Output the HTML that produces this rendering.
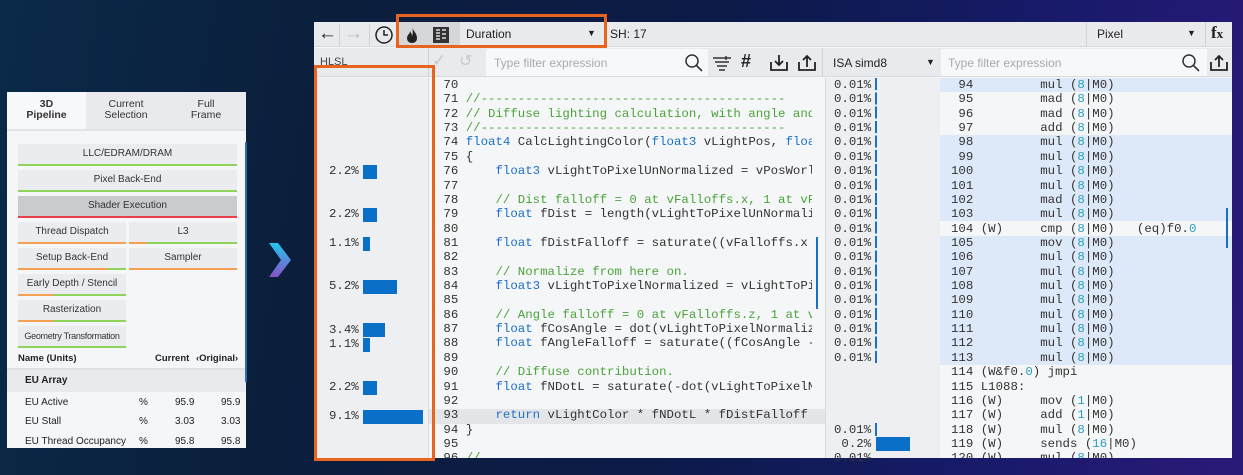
<!DOCTYPE html>
<html><head><meta charset="utf-8"><style>
*{margin:0;padding:0;box-sizing:border-box}
body{width:1243px;height:475px;overflow:hidden;position:relative;font-family:"Liberation Sans","DejaVu Sans",sans-serif;
background:linear-gradient(100deg,#0a2a48 0%,#0b1f3c 25%,#0c1a48 55%,#181a6a 80%,#2a1a78 100%)}
.a{position:absolute}
.lp{left:7px;top:92px;width:239px;height:356px;background:#f5f6f8;font-size:10px;color:#222}
.tab{position:absolute;top:0;height:37px;text-align:center;font-size:10.5px;line-height:11px;padding-top:7px;background:#e9eaed;color:#333}
.btn{position:absolute;height:22px;background:#ebecef;text-align:center;line-height:20px;font-size:10px;color:#333;white-space:nowrap;overflow:hidden}
.btn i{position:absolute;left:0;right:0;bottom:0;height:2px;display:block}
.win{left:314px;top:22px;width:918px;height:436px;background:#f5f6f8}
.mono{font-family:"Liberation Mono","DejaVu Sans Mono",monospace;font-size:12.4px;line-height:14.36px;white-space:pre}
.k{color:#1c6fc8}.c{color:#4ca23a}.n{color:#2aa0c0}
.bar{position:absolute;height:14px;background:#0a6fc6}
</style></head><body>

<div class="a lp">
 <div class="tab" style="left:0;width:79px;background:#f7f8fa;font-weight:bold">3D<br>Pipeline</div>
 <div class="tab" style="left:79px;width:80px">Current<br>Selection</div>
 <div class="tab" style="left:159px;width:80px">Full<br>Frame</div>
 <div class="a" style="left:0;top:37px;width:239px;height:2px;background:#e2e3e6"></div>
 <div class="btn" style="left:11px;top:52px;width:219px">LLC/EDRAM/DRAM<i style="background:#8fd45a"></i></div>
 <div class="btn" style="left:11px;top:78px;width:219px">Pixel Back-End<i style="background:#8fd45a"></i></div>
 <div class="btn" style="left:11px;top:104px;width:219px;background:#c9cbcf">Shader Execution<i style="background:#e8404a"></i></div>
 <div class="btn" style="left:11px;top:130px;width:108px">Thread Dispatch<i style="background:#f5a050"></i></div>
 <div class="btn" style="left:122px;top:130px;width:108px">L3<i style="background:linear-gradient(90deg,#f5a050 16%,#8fd45a 16%)"></i></div>
 <div class="btn" style="left:11px;top:156px;width:108px">Setup Back-End<i style="background:linear-gradient(90deg,#f5a050 83%,#8fd45a 83%)"></i></div>
 <div class="btn" style="left:122px;top:156px;width:108px">Sampler<i style="background:#f5a050"></i></div>
 <div class="btn" style="left:11px;top:182px;width:108px">Early Depth / Stencil<i style="background:linear-gradient(90deg,#f5a050 33%,#8fd45a 33%)"></i></div>
 <div class="btn" style="left:11px;top:208px;width:108px">Rasterization<i style="background:linear-gradient(90deg,#f5a050 33%,#8fd45a 33%)"></i></div>
 <div class="btn" style="left:11px;top:234px;width:108px;font-size:9px;letter-spacing:-0.3px">Geometry Transformation<i style="background:#8fd45a"></i></div>
 <div class="a" style="left:11px;top:261px;font-weight:bold;font-size:9.5px">Name (Units)</div>
 <div class="a" style="left:148px;top:261px;font-weight:bold;font-size:9.5px">Current</div>
 <div class="a" style="left:189px;top:261px;font-weight:bold;font-size:9.5px">‹Original›</div>
 <div class="a" style="left:0;top:276px;width:239px;height:2px;background:#e0e1e4"></div>
 <div class="a" style="left:0;top:278px;width:239px;height:22px;background:#e9eaed;font-weight:bold;padding:5px 0 0 18px">EU Array</div>
 <div class="a" style="left:18px;top:305px">EU Active</div><div class="a" style="left:132px;top:305px">%</div><div class="a" style="left:168px;top:305px">95.9</div><div class="a" style="left:214px;top:305px">95.9</div>
 <div class="a" style="left:18px;top:324px">EU Stall</div><div class="a" style="left:132px;top:324px">%</div><div class="a" style="left:168px;top:324px">3.03</div><div class="a" style="left:214px;top:324px">3.03</div>
 <div class="a" style="left:18px;top:344px">EU Thread Occupancy</div><div class="a" style="left:132px;top:344px">%</div><div class="a" style="left:168px;top:344px">95.8</div><div class="a" style="left:214px;top:344px">95.8</div>
 <div class="a" style="left:238px;top:50px;width:2px;height:240px;background:#2a6bb0"></div>
</div>

<svg class="a" style="left:264px;top:240px" width="32" height="40" viewBox="0 0 32 40">
<defs><linearGradient id="g" x1="0" y1="0" x2="0" y2="1"><stop offset="0" stop-color="#20c8f0"/><stop offset="1" stop-color="#8a50c8"/></linearGradient></defs>
<path d="M5 3 L14 3 L27 20 L14 37 L5 37 L17 20 Z" fill="url(#g)"/></svg>

<div class="a win">
 <div class="a" style="left:0;top:0;width:918px;height:25px;background:#e9eaed;border-bottom:1px solid #d8d9dc"></div>
 <div class="a" style="left:4px;top:1px;font-size:19px;color:#222">←</div>
 <div class="a" style="left:30px;top:1px;font-size:19px;color:#bbb">→</div>
 <div class="a" style="left:25px;top:2px;width:1px;height:22px;background:#d0d1d4"></div>
 <div class="a" style="left:55px;top:2px;width:1px;height:22px;background:#d0d1d4"></div>
 <svg class="a" style="left:60px;top:3px" width="20" height="20"><circle cx="10" cy="10" r="8" fill="none" stroke="#222" stroke-width="1.5"/><path d="M10 5 V10 H14" stroke="#222" stroke-width="1.5" fill="none"/></svg>
 <div class="a" style="left:83px;top:0;width:63px;height:25px;background:#d6d7db"></div>
 <svg class="a" style="left:90px;top:3px" width="16" height="20"><path d="M8 2 C9 6 13 8 13 13 C13 17 10 18 8 18 C5 18 3 16 3 13 C3 10 6 9 6 6 C7 8 8 9 8 11 C9 9 9 5 8 2Z" fill="#222"/></svg>
 <svg class="a" style="left:118px;top:4px" width="18" height="18"><rect x="1" y="1" width="16" height="16" fill="#333"/><path d="M4 4h4M4 7h4M4 10h4M4 13h4M10 4h4M10 8h4M10 12h4" stroke="#ddd" stroke-width="1.4"/></svg>
 <div class="a" style="left:146px;top:0;width:142px;height:25px;background:#e9eaed"></div>
 <div class="a" style="left:152px;top:5px;font-size:12px;color:#222">Duration</div>
 <div class="a" style="left:273px;top:6px;font-size:9px;color:#222">▼</div>
 <div class="a" style="left:290px;top:2px;width:1px;height:22px;background:#d0d1d4"></div>
 <div class="a" style="left:296px;top:5px;font-size:12px;color:#222">SH: 17</div>
 <div class="a" style="left:772px;top:0;width:1px;height:25px;background:#d0d1d4"></div>
 <div class="a" style="left:783px;top:5px;font-size:12px;color:#222">Pixel</div>
 <div class="a" style="left:873px;top:6px;font-size:9px;color:#222">▼</div>
 <div class="a" style="left:891px;top:0;width:1px;height:25px;background:#d0d1d4"></div>
 <div class="a" style="left:897px;top:1px;font-size:17px;color:#222;font-family:'Liberation Serif',serif;font-weight:bold">f<span style="font-size:13px">x</span></div>

 <div class="a" style="left:0;top:26px;width:918px;height:29px;background:#e9eaed;border-bottom:1px solid #d8d9dc"></div>
 <div class="a" style="left:6px;top:34px;font-size:11px;color:#444">HLSL</div>
 <div class="a" style="left:114px;top:26px;width:1px;height:29px;background:#d0d1d4"></div>
 <div class="a" style="left:118px;top:29px;font-size:17px;color:#c8c9cc">✓</div>
 <div class="a" style="left:145px;top:29px;font-size:16px;color:#c8c9cc">↺</div>
 <div class="a" style="left:172px;top:27px;width:222px;height:27px;background:#f7f8fa"></div>
 <div class="a" style="left:180px;top:34px;font-size:12px;color:#a8a9ad">Type filter expression</div>
 <svg class="a" style="left:370px;top:31px" width="20" height="20"><circle cx="8" cy="8" r="6" fill="none" stroke="#333" stroke-width="1.5"/><path d="M12.5 12.5 L18 18" stroke="#333" stroke-width="1.6"/></svg>
 <svg class="a" style="left:398px;top:33px" width="20" height="18"><path d="M1 3h18M3 7h14M5 11h10M7 15h6" stroke="#333" stroke-width="1.5"/><path d="M14 1v4" stroke="#333" stroke-width="1.5"/></svg>
 <div class="a" style="left:427px;top:29px;font-size:18px;font-weight:bold;color:#222">#</div>
 <svg class="a" style="left:455px;top:31px" width="20" height="20"><path d="M10 2v10M6 8l4 4 4-4M2 9v8h16V9" stroke="#222" stroke-width="1.8" fill="none"/></svg>
 <svg class="a" style="left:483px;top:31px" width="20" height="20"><path d="M10 14V3M6 7l4-4 4 4M2 9v8h16V9" stroke="#222" stroke-width="1.8" fill="none"/></svg>
 <div class="a" style="left:508px;top:26px;width:1px;height:29px;background:#d0d1d4"></div>
 <div class="a" style="left:519px;top:34px;font-size:12px;color:#222">ISA simd8</div>
 <div class="a" style="left:612px;top:35px;font-size:9px;color:#222">▼</div>
 <div class="a" style="left:627px;top:27px;width:266px;height:27px;background:#f7f8fa"></div>
 <div class="a" style="left:634px;top:34px;font-size:12px;color:#a8a9ad">Type filter expression</div>
 <svg class="a" style="left:867px;top:31px" width="20" height="20"><circle cx="8" cy="8" r="6" fill="none" stroke="#333" stroke-width="1.5"/><path d="M12.5 12.5 L18 18" stroke="#333" stroke-width="1.6"/></svg>
 <svg class="a" style="left:895px;top:31px" width="20" height="20"><path d="M10 14V3M6 7l4-4 4 4M2 9v8h16V9" stroke="#222" stroke-width="1.8" fill="none"/></svg>

 <div class="a" style="left:0;top:56px;width:114px;height:380px;background:#eeeff2"></div>
 <div class="a" style="left:114px;top:56px;width:1px;height:380px;background:#d8d9dc"></div>
 <div class="a" style="left:115px;top:56px;width:396px;height:380px;background:#f5f6f8"></div>
 <div class="a" style="left:115px;top:387px;width:396px;height:15px;background:#e4e5e8"></div>
 <div class="a" style="left:502px;top:215px;width:2px;height:72px;background:#1c6fc8"></div>
 <div class="a mono" style="left:0;top:56px;width:114px;color:#333"><span style="position:absolute;left:15px;top:86px">2.2%</span><span style="position:absolute;left:15px;top:129px">2.2%</span><span style="position:absolute;left:15px;top:158px">1.1%</span><span style="position:absolute;left:15px;top:201px">5.2%</span><span style="position:absolute;left:15px;top:245px">3.4%</span><span style="position:absolute;left:15px;top:259px">1.1%</span><span style="position:absolute;left:15px;top:302px">2.2%</span><span style="position:absolute;left:15px;top:331px">9.1%</span></div>
 <div class="bar" style="left:49px;top:143px;width:14px"></div>
 <div class="bar" style="left:49px;top:186px;width:14px"></div>
 <div class="bar" style="left:49px;top:215px;width:7px"></div>
 <div class="bar" style="left:49px;top:258px;width:34px"></div>
 <div class="bar" style="left:49px;top:301px;width:22px"></div>
 <div class="bar" style="left:49px;top:316px;width:7px"></div>
 <div class="bar" style="left:49px;top:359px;width:14px"></div>
 <div class="bar" style="left:49px;top:388px;width:60px"></div>

 <div class="a mono" style="left:122px;top:56px;width:376px;height:380px;overflow:hidden;color:#333"> 70
 71 <span class="c">//-----------------------------------------</span>
 72 <span class="c">// Diffuse lighting calculation, with angle and</span>
 73 <span class="c">//-----------------------------------------</span>
 74 <span class="k">float4</span> CalcLightingColor(<span class="k">float3</span> vLightPos, <span class="k">floa</span>
 75 {
 76     <span class="k">float3</span> vLightToPixelUnNormalized = vPosWorl
 77
 78     <span class="c">// Dist falloff = 0 at vFalloffs.x, 1 at vF</span>
 79     <span class="k">float</span> fDist = length(vLightToPixelUnNormali
 80
 81     <span class="k">float</span> fDistFalloff = saturate((vFalloffs.x
 82
 83     <span class="c">// Normalize from here on.</span>
 84     <span class="k">float3</span> vLightToPixelNormalized = vLightToPi
 85
 86     <span class="c">// Angle falloff = 0 at vFalloffs.z, 1 at v</span>
 87     <span class="k">float</span> fCosAngle = dot(vLightToPixelNormaliz
 88     <span class="k">float</span> fAngleFalloff = saturate((fCosAngle -
 89
 90     <span class="c">// Diffuse contribution.</span>
 91     <span class="k">float</span> fNDotL = saturate(-dot(vLightToPixelN
 92
 93     <span class="k">return</span> vLightColor * fNDotL * fDistFalloff
 94 }
 95
 96 <span class="c">//</span></div>

 <div class="a" style="left:511px;top:56px;width:1px;height:380px;background:#d8d9dc"></div>
 <div class="a" style="left:512px;top:56px;width:114px;height:380px;background:#eeeff2"></div>
 <div class="a" style="left:626px;top:56px;width:292px;height:380px;background:#f5f6f8"></div>
 <div class="a" style="left:626px;top:56px;width:292px;height:14px;background:#dde9f8"></div>
 <div class="a" style="left:626px;top:113px;width:292px;height:86px;background:#dde9f8"></div>
 <div class="a" style="left:626px;top:214px;width:292px;height:129px;background:#dde9f8"></div>
 <div class="a" style="left:912px;top:186px;width:2px;height:40px;background:#1c6fc8"></div>
 <div class="a mono" style="left:520px;top:56px;color:#333">0.01%
0.01%
0.01%
0.01%
0.01%
0.01%
0.01%
0.01%
0.01%
0.01%
0.01%
0.01%
0.01%
0.01%
0.01%
0.01%
0.01%
0.01%
0.01%
0.01%




0.01%
 0.2%
0.01%</div>
 <div class="a" style="left:561px;top:56px;width:2px;height:287px;background:repeating-linear-gradient(#1c6fc8 0 12px,transparent 12px 14.36px)"></div>
 <div class="a" style="left:561px;top:401px;width:2px;height:13px;background:#1c6fc8"></div>
 <div class="bar" style="left:562px;top:415px;width:34px"></div>
 <div class="a mono" style="left:637px;top:56px;width:272px;height:380px;overflow:hidden;color:#333"> 94         mul (<span class="n">8</span>|M0)
 95         mad (<span class="n">8</span>|M0)
 96         mad (<span class="n">8</span>|M0)
 97         add (<span class="n">8</span>|M0)
 98         mul (<span class="n">8</span>|M0)
 99         mul (<span class="n">8</span>|M0)
100         mul (<span class="n">8</span>|M0)
101         mul (<span class="n">8</span>|M0)
102         mad (<span class="n">8</span>|M0)
103         mul (<span class="n">8</span>|M0)
104 (W)     cmp (<span class="n">8</span>|M0)   (eq)f0.<span class="n">0</span>
105         mov (<span class="n">8</span>|M0)
106         mul (<span class="n">8</span>|M0)
107         mul (<span class="n">8</span>|M0)
108         mul (<span class="n">8</span>|M0)
109         mul (<span class="n">8</span>|M0)
110         mul (<span class="n">8</span>|M0)
111         mul (<span class="n">8</span>|M0)
112         mul (<span class="n">8</span>|M0)
113         mul (<span class="n">8</span>|M0)
114 (W&amp;f0.<span class="n">0</span>) jmpi
115 L1088:
116 (W)     mov (<span class="n">1</span>|M0)
117 (W)     add (<span class="n">1</span>|M0)
118 (W)     mul (<span class="n">8</span>|M0)
119 (W)     sends (<span class="n">16</span>|M0)
120 (W)     mul (<span class="n">8</span>|M0)</div>
</div>

<div class="a" style="left:396px;top:14px;width:211px;height:34px;border:3px solid #e8641e"></div>
<div class="a" style="left:314px;top:65px;width:121px;height:396px;border:3px solid #e8641e"></div>
</body></html>
